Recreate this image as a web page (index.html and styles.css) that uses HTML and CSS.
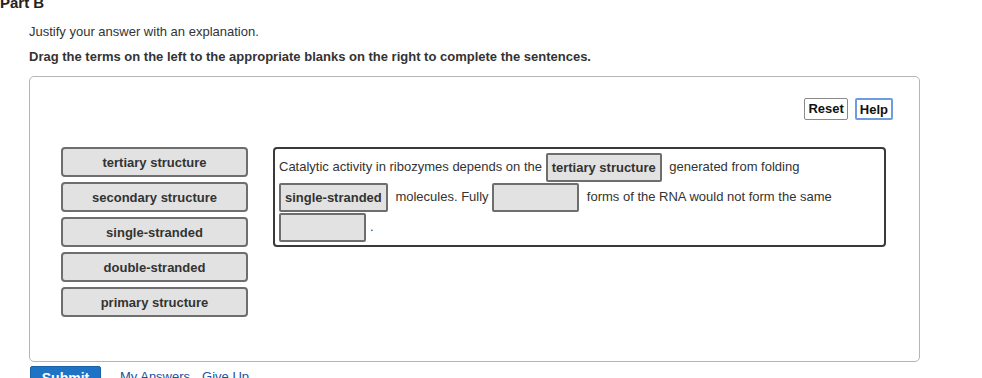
FILE: index.html
```html
<!DOCTYPE html>
<html>
<head>
<meta charset="utf-8">
<link rel="stylesheet" href="styles.css">
</head>
<body>
<div class="page">
  <div class="part">Part B</div>
  <div class="content">
    <p class="intro">Justify your answer with an explanation.</p>
    <p class="instr">Drag the terms on the left to the appropriate blanks on the right to complete the sentences.</p>
    <div class="panel">
      <div class="tools">
        <button class="tbtn">Reset</button>
        <button class="tbtn help">Help</button>
      </div>
      <div class="work">
        <div class="terms">
          <div class="term">tertiary structure</div>
          <div class="term">secondary structure</div>
          <div class="term">single-stranded</div>
          <div class="term">double-stranded</div>
          <div class="term">primary structure</div>
        </div>
        <div class="sentence">Catalytic activity in ribozymes depends on the <span class="chip">tertiary structure</span> generated from folding<br><span class="chip">single-stranded</span> molecules. Fully <span class="chip blank"></span> forms of the RNA would not form the same<br><span class="chip blank"></span>.</div>
      </div>
    </div>
    <div class="actions">
      <button class="submit">Submit</button>
      <a class="link">My Answers</a>
      <a class="link">Give Up</a>
    </div>
  </div>
</div>
</body>
</html>
```

FILE: styles.css
```css
html, body {
  margin: 0;
  padding: 0;
  background: #fff;
  font-family: "Liberation Sans", Arial, sans-serif;
  color: #333;
}
.page {
  width: 982px;
  height: 378px;
  overflow: hidden;
}
.part {
  font-size: 15px;
  font-weight: bold;
  line-height: 16px;
  margin-top: -5px;
  color: #222;
}
.content {
  padding-left: 29px;
}
.intro {
  margin: 13px 0 0 0;
  font-size: 13px;
  line-height: 16px;
  color: #333;
}
.instr {
  margin: 9px 0 0 0;
  font-size: 13px;
  line-height: 16px;
  font-weight: bold;
  color: #333;
}
.panel {
  margin-top: 11px;
  width: 889px;
  height: 284px;
  border: 1px solid #b5b5b5;
  border-radius: 5px;
}
.tools {
  display: flex;
  justify-content: flex-end;
  gap: 7px;
  padding: 21px 26px 0 0;
}
.tbtn {
  font-family: "Liberation Sans", Arial, sans-serif;
  font-size: 13px;
  font-weight: bold;
  color: #111;
  background: #fff;
  border: 1px solid #8a8a8a;
  border-radius: 2px;
  height: 22px;
  padding: 0 3px;
  line-height: 20px;
}
.tbtn.help {
  border: 2px solid #6f9be0;
  padding: 0 3px;
}
.work {
  display: flex;
  gap: 25px;
  padding: 27px 0 0 31px;
}
.terms {
  display: flex;
  flex-direction: column;
  gap: 5px;
}
.term {
  width: 187px;
  height: 30px;
  box-sizing: border-box;
  border: 2px solid #6e6e6e;
  border-radius: 4px;
  background: #e2e2e2;
  font-size: 13px;
  font-weight: bold;
  color: #333;
  display: flex;
  align-items: center;
  justify-content: center;
}
.sentence {
  width: 613px;
  height: 100px;
  box-sizing: border-box;
  border: 2px solid #3a3a3a;
  border-radius: 4px;
  padding: 3px 4px 0 4px;
  font-size: 13px;
  line-height: 30px;
  color: #333;
}
.chip {
  display: inline-block;
  vertical-align: middle;
  box-sizing: border-box;
  height: 29px;
  line-height: 25px;
  padding: 0 4px;
  margin: -1px 4px 0 0;
  border: 2px solid #6e6e6e;
  border-radius: 2px;
  background: #e2e2e2;
  font-weight: bold;
  color: #333;
}
.chip.blank {
  width: 87px;
}
.actions {
  display: flex;
  align-items: flex-start;
  margin-top: 4px;
}
.submit {
  width: 71px;
  height: 24px;
  background: #1f73c4;
  border: 1px solid #1a62a8;
  border-radius: 2px;
  color: #fff;
  font-family: "Liberation Sans", Arial, sans-serif;
  font-size: 14px;
  font-weight: bold;
  padding: 0;
  margin-left: 1px;
}
.link {
  font-size: 13px;
  color: #23519c;
  margin-left: 19px;
  line-height: 18px;
  margin-top: 2px;
}
.link + .link {
  margin-left: 12px;
}
```
